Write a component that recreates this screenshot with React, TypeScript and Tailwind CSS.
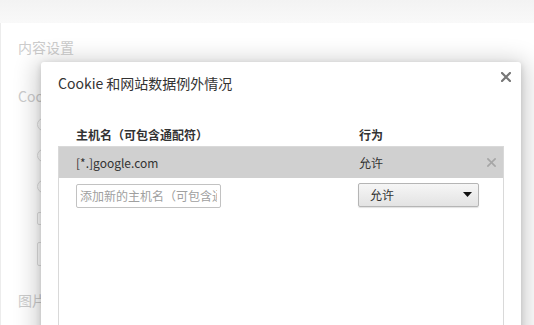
const font = "font-['Noto_Sans_CJK_SC','Noto_Sans',sans-serif]";

function CloseIcon({ color, size, width }: { color: string; size: number; width: number }) {
  return (
    <svg width={size} height={size} viewBox="0 0 10 10">
      <path d="M1 1 L9 9 M9 1 L1 9" stroke={color} strokeWidth={width} strokeLinecap="square" />
    </svg>
  );
}

// faded settings page behind the dialog
function BackgroundPage() {
  return (
    <div className="flex h-full flex-col">
      <div className="h-[23px] shrink-0 bg-gradient-to-b from-[#f3f3f3] to-[#f9f9f9]" />
      <div className="flex-1 border-l border-[#ececec] bg-white pl-[17px] text-[#cccccc]">
        <div className="mt-[14px] text-[14px] leading-[20px]">内容设置</div>
        <div className="mt-[29px] text-[14px] leading-[20px]">Cookie</div>
        <div className="ml-[19px] mt-[12px] flex flex-col gap-[18px]">
          <div className="h-[13px] w-[13px] rounded-full border border-[#dedede]" />
          <div className="h-[13px] w-[13px] rounded-full border border-[#dedede]" />
          <div className="h-[13px] w-[13px] rounded-full border border-[#dedede]" />
        </div>
        <div className="ml-[19px] mt-[19px] h-[13px] w-[13px] rounded-[2px] border border-[#dedede]" />
        <div className="ml-[19px] mt-[17px] h-[24px] w-[60px] rounded-[2px] border border-[#dedede]" />
        <div className="mt-[24px] text-[14px] leading-[20px]">图片</div>
      </div>
    </div>
  );
}

export default function App() {
  return (
    <div className={`relative h-[325px] w-[534px] overflow-hidden bg-white ${font}`}>
      <BackgroundPage />

      {/* Dialog */}
      <div className="absolute left-[41px] top-[62px] h-[300px] w-[480px] rounded-[3px] bg-white px-[17px] pt-[11px] shadow-[0_4px_23px_5px_rgba(0,0,0,0.2),0_2px_6px_rgba(0,0,0,0.15)]">
        <div className="absolute right-[10px] top-[10px]">
          <CloseIcon color="#777777" size={10} width={2.2} />
        </div>

        <h1 className="text-[14px] leading-[20px] text-[#333333]">Cookie 和网站数据例外情况</h1>

        <div className="mb-[3px] mt-[34px] flex pl-[18px] text-[12px] font-bold leading-[16px] text-[#333333]">
          <div className="w-[283px]">主机名（可包含通配符）</div>
          <div>行为</div>
        </div>

        <div className="h-[300px] w-[446px] border border-[#d9d9d9]">
          <div className="flex h-[31px] items-center bg-[#d0d0d0] pl-[17px] pr-[7px] text-[12px] text-[#333333]">
            <div className="w-[283px]">[*.]google.com</div>
            <div>允许</div>
            <div className="ml-auto">
              <CloseIcon color="#a6a6a6" size={9} width={1.8} />
            </div>
          </div>

          <div className="flex items-center py-[4px] pl-[17px]">
            <div className="w-[282px]">
              <input
                readOnly
                placeholder="添加新的主机名（可包含通配符）"
                className="h-[24px] w-[145px] rounded-[2px] border border-[#c2c2c2] bg-white px-[3px] text-[12px] text-[#333333] outline-none placeholder:text-[#a0a0a0]"
              />
            </div>
            <div className="flex h-[24px] w-[121px] items-center justify-between rounded-[2px] border border-[#b5b5b5] bg-gradient-to-b from-[#f6f6f6] to-[#e3e3e3] pl-[11px] pr-[6px] text-[12px] text-[#333333] shadow-[0_1px_1px_rgba(0,0,0,0.12)]">
              <span>允许</span>
              <svg width="9" height="5" viewBox="0 0 9 5">
                <path d="M0 0 L9 0 L4.5 5 Z" fill="#111111" />
              </svg>
            </div>
          </div>
        </div>
      </div>
    </div>
  );
}
